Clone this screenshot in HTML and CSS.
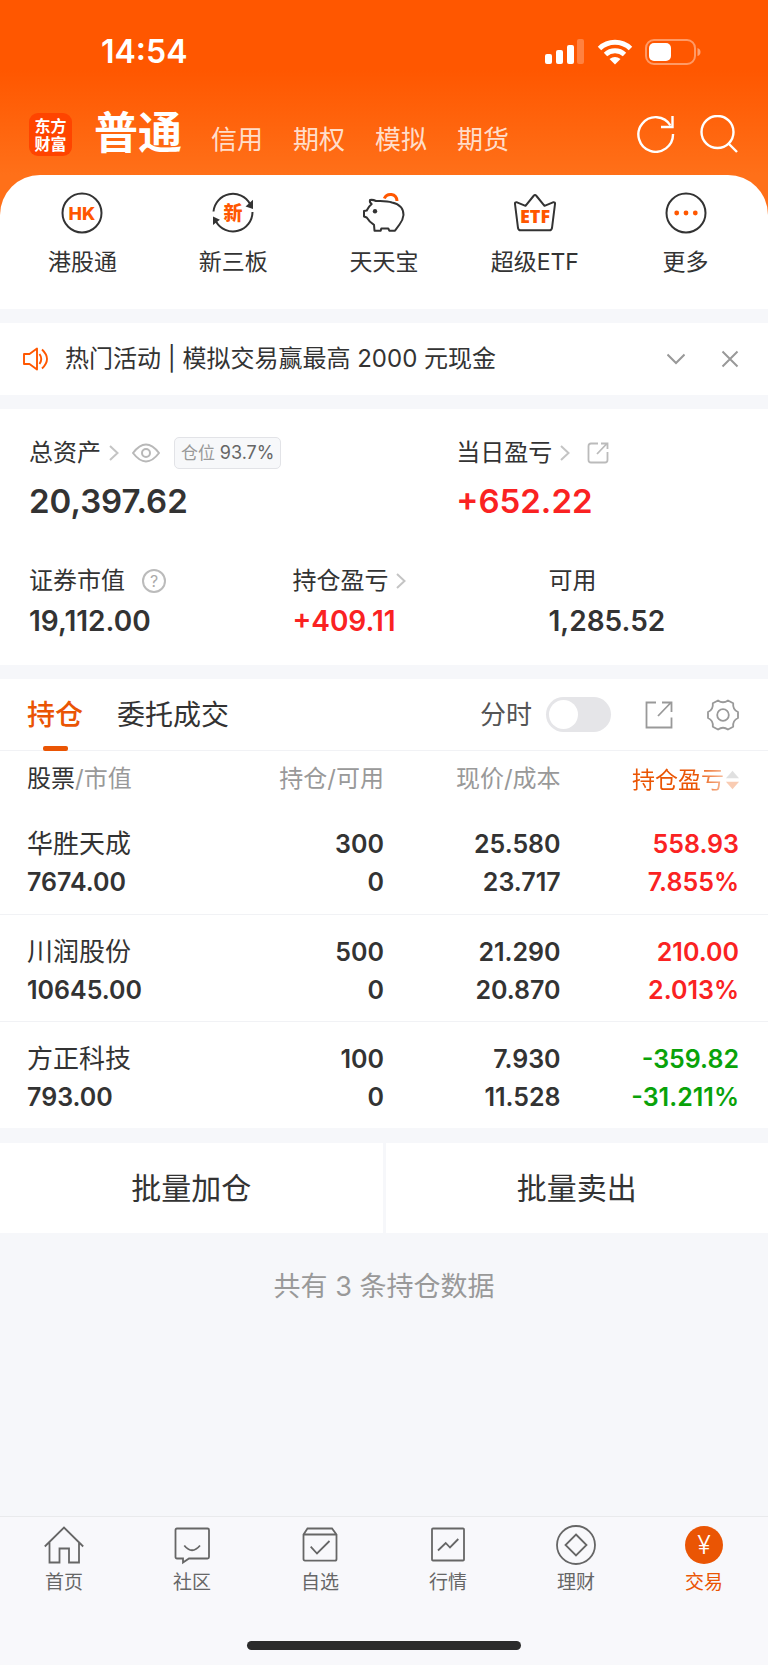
FILE: index.html
```
<!DOCTYPE html>
<html lang="zh-CN">
<head>
    <meta charset="UTF-8">
    <meta name="viewport" content="width=device-width, initial-scale=1.0">
    <title>交易 - 持仓</title>
    <link rel="stylesheet" href="styles.css">
</head>
<body>
    <header class="top">
        <div class="status-bar">
            <span class="time">14:54</span>
            <div class="status-icons">
                <svg width="40" height="26" viewBox="0 0 40 26" fill="#fff">
                    <rect x="0" y="15" width="7" height="10" rx="2"/>
                    <rect x="11" y="11" width="7" height="14" rx="2"/>
                    <rect x="22" y="6" width="7" height="19" rx="2"/>
                    <rect x="32" y="0" width="7" height="25" rx="2" opacity="0.25"/>
                </svg>
                <svg width="36" height="26" viewBox="0 0 36 26" fill="none" stroke="#fff" stroke-width="5">
                    <path d="M2.500 9.500A22.500 22.500 0 0 1 33.500 9.500"/>
                    <path d="M8.500 15.500A14 14 0 0 1 27.500 15.500"/>
                    <path d="M12.500 20Q18 16 23.500 20L18 25.500Z" fill="#fff" stroke="none"/>
                </svg>
                <svg width="56" height="26" viewBox="0 0 56 26" fill="none">
                    <rect x="1" y="1" width="49" height="24" rx="8" stroke="#fff" stroke-opacity="0.4" stroke-width="2"/>
                    <rect x="4" y="4" width="22" height="18" rx="5" fill="#fff"/>
                    <path d="M52.500 9Q55.500 10 55.500 13T52.500 17Z" fill="#fff" fill-opacity="0.45"/>
                </svg>
            </div>
        </div>
        <div class="account-bar">
            <div class="logo">东方<br>财富</div>
            <nav class="account-tabs">
                <a href="#" class="active">普通</a>
                <a href="#">信用</a>
                <a href="#">期权</a>
                <a href="#">模拟</a>
                <a href="#">期货</a>
            </nav>
            <div class="account-actions">
                <button aria-label="刷新">
                    <svg width="38" height="38" viewBox="0 0 38 38" fill="none" stroke="#fff" stroke-width="2.400">
                        <path d="M36 19A17.300 17.300 0 1 1 33.500 10.500"/>
                        <path d="M35.500 1V12H24"/>
                    </svg>
                </button>
                <button aria-label="搜索">
                    <svg width="38" height="38" viewBox="0 0 38 38" fill="none" stroke="#fff" stroke-width="2.400">
                        <circle cx="17.500" cy="17" r="16"/>
                        <path d="M28.500 28.500L37 37"/>
                    </svg>
                </button>
            </div>
        </div>
    </header>

    <nav class="shortcuts">
        <a href="#">
            <svg width="42" height="42" viewBox="0 0 42 42" fill="none" stroke="#333" stroke-width="2">
                <circle cx="21" cy="21" r="19.500"/>
                <text class="icon-text" x="21" y="27.500" font-size="18">HK</text>
            </svg>
            <span>港股通</span>
        </a>
        <a href="#">
            <svg width="42" height="42" viewBox="0 0 42 42" fill="none" stroke="#333" stroke-width="2">
                <path d="M1.500 19.500A19.500 19.500 0 0 1 38 12M40.500 20A19.500 19.500 0 0 1 4 29.500"/>
                <path d="M40 10V15.500L35.500 14ZM2 31V26L6 28Z" fill="#333"/>
                <text class="icon-text" x="21" y="27.500" font-size="19">新</text>
            </svg>
            <span>新三板</span>
        </a>
        <a href="#">
            <svg width="42" height="42" viewBox="0 0 42 42" fill="none" stroke="#333" stroke-width="2" stroke-linejoin="round">
                <path d="M7 8Q10 7.500 13 9Q24 8.500 29 10.500Q40.500 13 40.500 23Q40 28 36.500 32.500L32 38.700H26.300L25.300 36.500H18.300L17.700 38.700H11.500L11 32.800Q6 29.500 3.700 25.500L1 24.500V19L3.700 18.500Q5.500 14.500 8.700 12Q6.300 10.500 7 8Z"/>
                <circle cx="12" cy="19.300" r="2.200" fill="#333" stroke="none"/>
                <path d="M21.300 6.500C24 0.500 33.500 1 34 9" stroke="#ff5700" stroke-width="3"/>
            </svg>
            <span>天天宝</span>
        </a>
        <a href="#">
            <svg width="42" height="42" viewBox="0 0 42 42" fill="none" stroke="#333" stroke-width="2" stroke-linejoin="round">
                <path d="M3 10.300L11.500 13.800L19.500 4Q21 2 22.500 4L30.500 13.800L39 10.300Q41.300 10 41 12L38 36Q37.500 38.300 35.500 38.300H6.500Q4.500 38.300 4 36L1 12Q0.700 10 3 10.300Z"/>
                <text class="icon-text etf" x="21" y="31" font-size="18">ETF</text>
            </svg>
            <span>超级ETF</span>
        </a>
        <a href="#">
            <svg width="42" height="42" viewBox="0 0 42 42" fill="none">
                <circle cx="21" cy="21" r="19.500" stroke="#333" stroke-width="2"/>
                <g fill="#ff5700">
                    <circle cx="11.700" cy="21" r="2.400"/>
                    <circle cx="21" cy="21" r="2.400"/>
                    <circle cx="30.300" cy="21" r="2.400"/>
                </g>
            </svg>
            <span>更多</span>
        </a>
    </nav>

    <section class="notice">
        <svg width="26" height="24" viewBox="0 0 26 24" fill="none" stroke="#ff5700" stroke-width="1.900" stroke-linejoin="round">
            <path d="M1 7H6.500L14 1.500V22.500L6.500 17H1Z"/>
            <path d="M16.500 7Q20 12 16.500 17M19 2.500Q29 12 19 21.500"/>
        </svg>
        <p>热门活动 | 模拟交易赢最高 2000 元现金</p>
        <button aria-label="展开">
            <svg width="18" height="18" viewBox="0 0 18 18" fill="none" stroke="#999" stroke-width="2"><path d="M0.500 4.500L9 13L17.500 4.500"/></svg>
        </button>
        <button aria-label="关闭">
            <svg width="18" height="18" viewBox="0 0 18 18" fill="none" stroke="#999" stroke-width="2"><path d="M1.500 1.500L16.500 16.500M16.500 1.500L1.500 16.500"/></svg>
        </button>
    </section>

    <section class="assets">
        <div class="assets-main">
            <div class="asset">
                <div class="asset-label">
                    <a href="#">总资产<svg class="arrow" width="10" height="16" viewBox="0 0 10 16"><path d="M1 1L8.500 8L1 15"/></svg></a>
                    <button aria-label="隐藏金额">
                        <svg width="28" height="20" viewBox="0 0 28 20" fill="none" stroke="#b8b8b8" stroke-width="2">
                            <path d="M1 10Q14-7 27 10Q14 27 1 10Z"/>
                            <circle cx="14" cy="10" r="4"/>
                        </svg>
                    </button>
                    <span class="badge">仓位 <b>93.7%</b></span>
                </div>
                <div class="asset-value big">20,397.62</div>
            </div>
            <div class="asset">
                <div class="asset-label">
                    <a href="#">当日盈亏<svg class="arrow" width="10" height="16" viewBox="0 0 10 16"><path d="M1 1L8.500 8L1 15"/></svg></a>
                    <button class="share" aria-label="分享">
                        <svg width="22" height="22" viewBox="0 0 22 22" fill="none" stroke="#bbb" stroke-width="1.800">
                            <path d="M11 1.500H4Q1.500 1.500 1.500 4V18Q1.500 20.500 4 20.500H18Q20.500 20.500 20.500 18V10"/>
                            <path d="M10 12L20 1.500M14 1.500H20.500V7"/>
                        </svg>
                    </button>
                </div>
                <div class="asset-value big up">+652.22</div>
            </div>
        </div>
        <div class="assets-sub">
            <div class="asset">
                <div class="asset-label">
                    证券市值
                    <button class="help" aria-label="说明">?</button>
                </div>
                <div class="asset-value">19,112.00</div>
            </div>
            <div class="asset">
                <div class="asset-label">
                    <a href="#">持仓盈亏<svg class="arrow" width="10" height="16" viewBox="0 0 10 16"><path d="M1 1L8.500 8L1 15"/></svg></a>
                </div>
                <div class="asset-value up">+409.11</div>
            </div>
            <div class="asset">
                <div class="asset-label">可用</div>
                <div class="asset-value">1,285.52</div>
            </div>
        </div>
    </section>

    <main class="holdings">
        <div class="holdings-bar">
            <a href="#" class="tab active">持仓</a>
            <a href="#" class="tab">委托成交</a>
            <label class="switch-label" for="minute">分时</label>
            <input type="checkbox" class="switch" id="minute">
            <button class="bar-share" aria-label="分享">
                <svg width="28" height="28" viewBox="0 0 28 28" fill="none" stroke="#999" stroke-width="1.800">
                    <path d="M11 1.500H1.500V26.500H26.500V16.500"/>
                    <path d="M13 15L26 1.500M17 1.500H26.500V11"/>
                </svg>
            </button>
            <button aria-label="设置">
                <svg width="32" height="32" viewBox="0 0 32 32" fill="none" stroke="#999" stroke-width="1.800" stroke-linejoin="round">
                    <path d="M31 13V19Q25.500 21.500 26.200 27.700L21 30.500Q16 27 11 30.500L5.800 27.700Q6.500 21.500 1 19V13Q6.500 10.500 5.800 4.300L11 1.500Q16 5 21 1.500L26.200 4.300Q25.500 10.500 31 13Z"/>
                    <circle cx="16" cy="16" r="5.800"/>
                </svg>
            </button>
        </div>

        <table>
            <thead>
                <tr>
                    <th class="col-name"><b>股票</b>/市值</th>
                    <th class="col-count">持仓/可用</th>
                    <th class="col-price">现价/成本</th>
                    <th class="col-profit">
                        <button class="sort">持仓盈亏<svg width="13" height="20" viewBox="0 0 14 20"><path d="M7 0L14 8H0Z" fill="#999"/><path d="M7 20L14 12H0Z" fill="#ea5504"/></svg></button>
                    </th>
                </tr>
            </thead>
            <tbody>
                <tr>
                    <td><span class="name">华胜天成</span>7674.00</td>
                    <td>300<br>0</td>
                    <td>25.580<br>23.717</td>
                    <td class="up">558.93<br>7.855%</td>
                </tr>
                <tr>
                    <td><span class="name">川润股份</span>10645.00</td>
                    <td>500<br>0</td>
                    <td>21.290<br>20.870</td>
                    <td class="up">210.00<br>2.013%</td>
                </tr>
                <tr>
                    <td><span class="name">方正科技</span>793.00</td>
                    <td>100<br>0</td>
                    <td>7.930<br>11.528</td>
                    <td class="down">-359.82<br>-31.211%</td>
                </tr>
            </tbody>
        </table>
    </main>

    <div class="batch">
        <button>批量加仓</button>
        <button>批量卖出</button>
    </div>
    <p class="total">共有 3 条持仓数据</p>

    <footer class="bottom">
        <nav class="bottom-nav">
            <a href="#">
                <svg width="40" height="40" viewBox="0 0 40 40">
                    <path d="M0.800 21.500L20 2.500L39.200 21.500M5.500 17.500V37.500H15.500V23.500H25V37.500H35V17.500"/>
                </svg>
                首页
            </a>
            <a href="#">
                <svg width="40" height="40" viewBox="0 0 40 40">
                    <path d="M5 3.500H35.500Q37 3.500 37 5V32Q37 33.500 35.500 33.500H17L11 37.500V33.500H5Q3.500 33.500 3.500 32V5Q3.500 3.500 5 3.500Z"/>
                    <path d="M12.300 20.500Q20 30 28 20.500"/>
                </svg>
                社区
            </a>
            <a href="#">
                <svg width="40" height="40" viewBox="0 0 40 40">
                    <path d="M3.500 9.500L7.500 3.500H32L36.500 9.500V34Q36.500 35.700 35 35.700H5Q3.500 35.700 3.500 34ZM3.500 9.500H36.500M10.700 21.700L17 28.500L29.500 16"/>
                </svg>
                自选
            </a>
            <a href="#">
                <svg width="40" height="40" viewBox="0 0 40 40">
                    <rect x="4" y="3.500" width="32" height="32" rx="1"/>
                    <path d="M10 25.500L17.700 18L22 22.500L30.300 14"/>
                </svg>
                行情
            </a>
            <a href="#">
                <svg width="40" height="40" viewBox="0 0 40 40">
                    <circle cx="20" cy="20" r="19"/>
                    <path d="M20 9.500L30.500 20L20 30.500L9.500 20Z"/>
                </svg>
                理财
            </a>
            <a href="#" class="active">
                <svg width="40" height="40" viewBox="0 0 40 40">
                    <circle class="disc" cx="20" cy="20" r="19"/>
                    <text x="20" y="29" font-size="25">¥</text>
                </svg>
                交易
            </a>
        </nav>
        <div class="home-indicator"></div>
    </footer>
</body>
</html>
```
FILE: styles.css
```
* {
    box-sizing: border-box;
}

body {
    font-family: Inter, "Noto Sans CJK SC", sans-serif;
    margin: 0;
    display: flex;
    flex-direction: column;
    min-height: 100vh;
    background: #f6f7fa;
    color: #333;
    font-size: 24px;
    line-height: 36px;
}

a {
    color: inherit;
    text-decoration: none;
}

button {
    background: none;
    border: none;
    padding: 0;
    margin: 0;
    font: inherit;
    color: inherit;
    cursor: pointer;
}

svg {
    display: block;
    flex-shrink: 0;
}

p {
    margin: 0;
}

.up {
    color: #fa2222;
}

.down {
    color: #09a209;
}

/* Шапка */
.top {
    height: 216px;
    margin-bottom: -41px;
    background: linear-gradient(#ff5700 70px, #ff7019 175px);
    color: #fff;
}

.status-bar {
    display: flex;
    align-items: center;
    justify-content: space-between;
    height: 104px;
    padding: 0 67px 0 101px;
}

.time {
    font-size: 32px;
    font-weight: 600;
}

.status-icons {
    display: flex;
    gap: 12px;
}

.account-bar {
    display: flex;
    align-items: center;
    height: 60px;
    padding: 0 30px 0 29px;
}

.logo {
    width: 43px;
    height: 43px;
    padding-top: 4px;
    border-radius: 9px;
    background: #ff4400;
    font-size: 16px;
    line-height: 18px;
    font-weight: 700;
    text-align: center;
}

.account-tabs {
    display: flex;
    align-items: baseline;
    gap: 29px;
    margin-left: 22px;
    padding-top: 5px;
    font-size: 26px;
    line-height: 60px;
    color: rgba(255, 255, 255, 0.8);
}

.account-tabs .active {
    font-size: 44px;
    font-weight: 700;
    color: #fff;
}

.account-tabs a + a {
    margin-right: 1px;
}

.account-actions {
    display: flex;
    gap: 25px;
    margin-left: auto;
}

/* Быстрые ссылки */
.shortcuts {
    display: grid;
    grid-template-columns: repeat(5, 1fr);
    height: 134px;
    padding: 17px 7px 0;
    border-radius: 40px 40px 0 0;
    background: #fff;
    font-size: 23px;
}

.shortcuts a {
    display: flex;
    flex-direction: column;
    align-items: center;
    gap: 12px;
    line-height: 32px;
}

.icon-text {
    fill: #ff5700;
    stroke: none;
    font-weight: 800;
    text-anchor: middle;
}

.etf {
    font-family: "Open Sans", sans-serif;
}

.notice {
    display: flex;
    align-items: center;
    height: 72px;
    margin-top: 14px;
    padding: 0 29px 0 23px;
    background: #fff;
}

.notice p {
    flex: 1;
    margin-left: 16px;
}

.notice button + button {
    margin-left: 36px;
}

/* Активы */
.assets {
    margin-top: 14px;
    padding: 24px 0 24px 29px;
    background: #fff;
}

.assets-main {
    display: grid;
    grid-template-columns: 37fr 27fr;
}

.assets-sub {
    display: grid;
    grid-template-columns: 36fr 35fr 30fr;
    margin-top: 32px;
}

.asset-label {
    display: flex;
    align-items: center;
    height: 40px;
}

.asset-label a {
    display: flex;
    align-items: center;
}

.arrow {
    margin-left: 8px;
    fill: none;
    stroke: #c4c4c4;
    stroke-width: 2;
}

.asset-label button {
    margin-left: 13px;
}

.asset-label .help {
    width: 24px;
    height: 24px;
    margin-left: 17px;
    border: 2px solid #bbb;
    border-radius: 50%;
    font-size: 16px;
    line-height: 20px;
    color: #aaa;
}

.asset-label .share {
    margin-left: 17px;
}

.badge {
    height: 32px;
    margin-left: 14px;
    padding: 0 6px;
    border: 1px solid #e2e3e7;
    border-radius: 5px;
    background: #f7f8fa;
    font-size: 17px;
    line-height: 30px;
    color: #999;
}

.badge b {
    font-size: 18px;
    font-weight: 400;
    color: #666;
}

.asset-value {
    font-size: 28px;
    line-height: 40px;
    font-weight: 600;
}

.asset-value.big {
    font-size: 33px;
    line-height: 56px;
}

/* Список позиций */
.holdings {
    margin-top: 14px;
    background: #fff;
}

.holdings-bar {
    display: flex;
    align-items: center;
    height: 72px;
    padding: 0 29px 0 27px;
    border-bottom: 1px solid #f1f2f5;
}

.tab {
    position: relative;
    margin-right: 34px;
    font-size: 28px;
    line-height: 72px;
}

.tab.active {
    color: #ea5504;
    font-weight: 500;
}

.tab.active::after {
    content: "";
    position: absolute;
    left: 50%;
    bottom: 0;
    width: 25px;
    height: 5px;
    margin-left: -12px;
    border-radius: 2px;
    background: #ea5504;
}

.switch-label {
    margin-left: auto;
    font-size: 26px;
    color: #555;
}

.switch {
    appearance: none;
    width: 65px;
    height: 35px;
    margin: 0 34px 0 14px;
    padding: 3px;
    border-radius: 18px;
    background: #e5e5e8;
    cursor: pointer;
}

.switch::before {
    content: "";
    display: block;
    width: 29px;
    height: 29px;
    border-radius: 50%;
    background: #fff;
}

.switch:checked {
    background: #ea5504;
}

.switch:checked::before {
    margin-left: 30px;
}

.bar-share {
    margin-right: 34px;
}

table {
    width: 100%;
    border-collapse: collapse;
    table-layout: fixed;
}

th {
    height: 56px;
    padding: 0;
    font-weight: 400;
    text-align: right;
    color: #999;
    white-space: nowrap;
}

th b {
    font-weight: 400;
    color: #333;
}

.col-name {
    width: 30%;
}

.col-count {
    width: 20%;
}

.col-price {
    width: 23%;
}

.sort {
    display: inline-flex;
    align-items: center;
    gap: 2px;
    font-size: 23px;
    vertical-align: middle;
    color: #ea5504;
    -webkit-mask-image: linear-gradient(90deg, #000 60%, rgba(0, 0, 0, 0.3) 90%);
    mask-image: linear-gradient(90deg, #000 60%, rgba(0, 0, 0, 0.3) 90%);
}

td {
    height: 107px;
    padding: 18px 0 12px;
    font-size: 25px;
    line-height: 38px;
    font-weight: 600;
    text-align: right;
    vertical-align: top;
}

tbody tr + tr {
    border-top: 1px solid #f1f2f5;
}

th:first-child,
td:first-child {
    padding-left: 27px;
    text-align: left;
}

th:last-child,
td:last-child {
    padding-right: 29px;
}

.name {
    display: block;
    font-size: 26px;
    font-weight: 400;
}

.batch {
    display: grid;
    grid-template-columns: 1fr 1fr;
    gap: 3px;
    margin-top: 15px;
}

.batch button {
    height: 90px;
    background: #fff;
    font-size: 30px;
}

.total {
    margin-top: 34px;
    font-size: 27px;
    line-height: 40px;
    text-align: center;
    color: #999;
}

/* Нижнее меню */
.bottom {
    margin-top: auto;
    border-top: 1px solid #e9eaec;
    background: #f8f8fb;
}

.bottom-nav {
    display: grid;
    grid-template-columns: repeat(6, 1fr);
    padding-top: 8px;
    font-size: 19px;
    line-height: 36px;
    color: #666;
}

.bottom-nav a {
    display: flex;
    flex-direction: column;
    align-items: center;
}

.bottom-nav svg {
    fill: none;
    stroke: #666;
    stroke-width: 1.8;
}

.bottom-nav .active {
    color: #ea5504;
}

.bottom-nav .disc {
    fill: #ea5504;
    stroke: none;
}

.bottom-nav text {
    fill: #fff;
    stroke: none;
    font-weight: 300;
    text-anchor: middle;
}

.home-indicator {
    width: 274px;
    height: 9px;
    margin: 40px auto 15px;
    border-radius: 5px;
    background: #2b2b2b;
}
```
